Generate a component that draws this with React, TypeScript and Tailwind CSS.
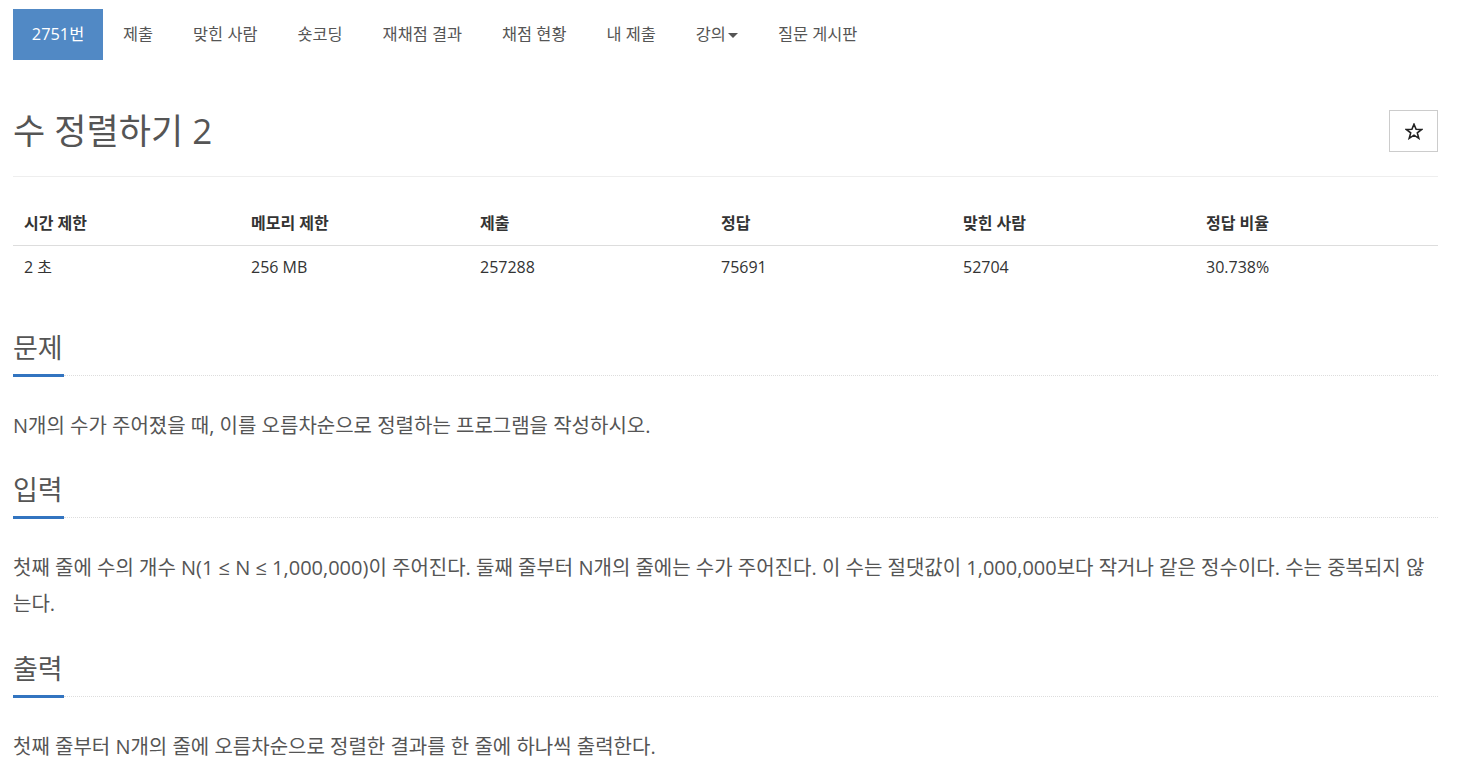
import React from "react";

const font = { fontFamily: '"Open Sans", "Noto Sans CJK KR", sans-serif' };

const navItems = ["제출", "맞힌 사람", "숏코딩", "재채점 결과", "채점 현황", "내 제출"];

const stats = [
  { label: "시간 제한", value: "2 초" },
  { label: "메모리 제한", value: "256 MB" },
  { label: "제출", value: "257288" },
  { label: "정답", value: "75691" },
  { label: "맞힌 사람", value: "52704" },
  { label: "정답 비율", value: "30.738%" },
];

const SectionTitle = ({ title }: { title: string }) => (
  <div>
    <h2 className="text-[27px] leading-[36px] text-[#555] font-normal">{title}</h2>
    <div className="mt-[8px] flex items-center">
      <div className="h-[3px] w-[51px] bg-[#3274c0]" />
      <div className="flex-1 border-t border-dotted border-[#ddd]" />
    </div>
  </div>
);

const App = () => {
  return (
    <div className="min-h-screen bg-white pl-[13px] pr-[23px]" style={font}>
      {/* Problem menu */}
      <div className="flex items-stretch pt-[9px] text-[16.35px] text-[#555]">
        <div className="flex h-[51px] w-[90px] items-center justify-center bg-[#5189c5] text-white">
          2751번
        </div>
        {navItems.map((item) => (
          <div key={item} className="flex h-[51px] items-center px-[20px]">
            {item}
          </div>
        ))}
        <div className="flex h-[51px] items-center px-[20px]">
          강의
          <span className="ml-[2px] mt-[2px] h-0 w-0 border-x-[5px] border-t-[5px] border-x-transparent border-t-[#555]" />
        </div>
        <div className="flex h-[51px] items-center px-[20px]">질문 게시판</div>
      </div>

      {/* Title */}
      <div className="mt-[50px] flex items-center justify-between border-b border-[#eee] pb-[24px]">
        <h1 className="text-[35px] leading-[42px] text-[#555] font-normal">수 정렬하기 2</h1>
        <button className="flex h-[42px] w-[49px] items-center justify-center border border-[#ccc] bg-white">
          <svg width="18" height="17" viewBox="0 0 18 17">
            <polygon
              points="9,1.2 11.1,6.3 16.6,6.5 12.3,9.9 13.8,15.3 9,12.2 4.2,15.3 5.7,9.9 1.4,6.5 6.9,6.3"
              fill="none"
              stroke="#222"
              strokeWidth="1.6"
              strokeLinejoin="miter"
            />
          </svg>
        </button>
      </div>

      {/* Stats table */}
      <div className="mt-[23px] grid grid-cols-[227px_229px_241px_242px_243px_1fr] text-[#333]">
        {stats.map((s) => (
          <div key={s.label} className="flex h-[46px] items-center border-b border-[#ddd] pl-[11px] text-[16px] font-bold">
            {s.label}
          </div>
        ))}
        {stats.map((s) => (
          <div key={s.value} className="flex h-[42px] items-center pl-[11px] text-[16px]">
            {s.value}
          </div>
        ))}
      </div>

      {/* Sections */}
      <div className="mt-[42px]">
        <SectionTitle title="문제" />
        <p className="mt-[31px] text-[20px] leading-[36px] text-[#555]">
          N개의 수가 주어졌을 때, 이를 오름차순으로 정렬하는 프로그램을 작성하시오.
        </p>
      </div>

      <div className="mt-[28px]">
        <SectionTitle title="입력" />
        <p className="mt-[31px] text-[20px] leading-[36px] text-[#555]">
          첫째 줄에 수의 개수 N(1 ≤ N ≤ 1,000,000)이 주어진다. 둘째 줄부터 N개의 줄에는 수가 주어진다. 이 수는 절댓값이 1,000,000보다 작거나 같은 정수이다. 수는 중복되지 않는다.
        </p>
      </div>

      <div className="mt-[29px]">
        <SectionTitle title="출력" />
        <p className="mt-[31px] text-[20px] leading-[36px] text-[#555]">
          첫째 줄부터 N개의 줄에 오름차순으로 정렬한 결과를 한 줄에 하나씩 출력한다.
        </p>
      </div>
    </div>
  );
};

export default App;
